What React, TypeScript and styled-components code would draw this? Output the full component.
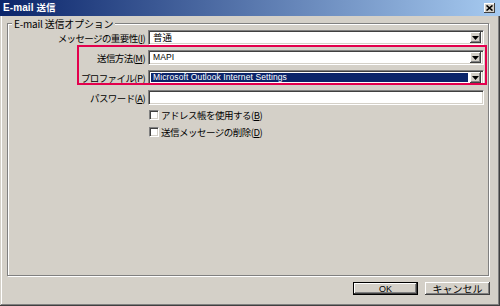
import React from "react";
import styled, { createGlobalStyle } from "styled-components";

const GlobalStyle = createGlobalStyle`
  html, body { margin: 0; padding: 0; background: #d4d0c8; }
  body { font-family: "Noto Sans CJK JP", "Noto Sans", sans-serif; }
  * { box-sizing: border-box; }
`;

const Window = styled.div`
  position: relative;
  width: 500px;
  height: 306px;
  display: flex;
  flex-direction: column;
  background: #d4d0c8;
  box-shadow: inset -1px -1px 0 #404040, inset 1px 1px 0 #d4d0c8,
    inset -2px -2px 0 #808080, inset 2px 2px 0 #ffffff;
  font-family: "Noto Sans CJK JP", "Noto Sans", sans-serif;
  font-size: 10px;
  color: #000;
`;

const TitleBar = styled.div`
  height: 16px;
  display: flex;
  align-items: center;
  justify-content: space-between;
  padding: 0 5px 0 3px;
  background: linear-gradient(to right, #0a246a, #a6caf0);
  color: #fff;
  font-weight: bold;
  font-size: 10px;
  line-height: 16px;
`;

const TitleText = styled.span`
  font-family: "Liberation Sans", "Noto Sans CJK JP", sans-serif;
  letter-spacing: 0.1px;
`;

const CloseButton = styled.div`
  width: 11px;
  height: 10px;
  background: #d4d0c8;
  box-shadow: inset -1px -1px 0 #404040, inset 1px 1px 0 #ffffff;
  display: flex;
  align-items: center;
  justify-content: center;
`;

const Content = styled.div`
  flex: 1;
  display: flex;
  flex-direction: column;
  padding: 2px 11px 0 7px;
`;

const Group = styled.fieldset`
  flex: 1;
  margin: 0;
  padding: 0 5px 0 0;
  min-width: 0;
  border: 1px solid #808080;
  box-shadow: 1px 1px 0 #ffffff, inset 1px 1px 0 #ffffff;
`;

const Legend = styled.legend`
  margin-left: 4px;
  padding: 0 2px;
  background: #d4d0c8;
  line-height: 11px;
  font-size: 10px;
  letter-spacing: -0.2px;
`;

const Form = styled.div`
  display: grid;
  grid-template-columns: 137px 336px;
  grid-auto-rows: 15px;
  column-gap: 3px;
  row-gap: 5px;
  padding-top: 1px;
`;

const Label = styled.div`
  display: flex;
  align-items: center;
  justify-content: flex-end;
  white-space: nowrap;
  font-size: 9.5px;
  letter-spacing: -0.6px;
`;

const Field = styled.div`
  display: flex;
  align-items: stretch;
  background: #ffffff;
  border-top: 1px solid #808080;
  border-left: 1px solid #808080;
  border-bottom: 1px solid #ffffff;
  border-right: 1px solid #ffffff;
  box-shadow: inset 1px 1px 0 #404040, inset -1px -1px 0 #d4d0c8;
  padding: 1px 2px 1px 1px;
`;

const FieldText = styled.div<{ $selected?: boolean }>`
  flex: 1;
  display: flex;
  align-items: center;
  padding-left: 2px;
  margin: 1px 2px 1px 1px;
  background: ${(p) => (p.$selected ? "#0a246a" : "transparent")};
  color: ${(p) => (p.$selected ? "#ffffff" : "#000000")};
  font-family: "Liberation Sans", "Noto Sans CJK JP", sans-serif;
  font-size: 8.5px;
  line-height: 9px;
  letter-spacing: 0.1px;
  white-space: nowrap;
  overflow: visible;
`;

const JpText = styled.span`
  font-family: "Noto Sans CJK JP", sans-serif;
  font-size: 9.5px;
  line-height: 9px;
  letter-spacing: 0;
`;

const DropButton = styled.div`
  width: 11px;
  background: #d4d0c8;
  box-shadow: inset -1px -1px 0 #404040, inset 1px 1px 0 #ffffff,
    inset -2px -2px 0 #808080;
  display: flex;
  align-items: center;
  justify-content: center;
`;

const Checks = styled.div`
  display: flex;
  flex-direction: column;
  padding: 1px 0 0 140px;
`;

const CheckRow = styled.div`
  height: 17px;
  display: flex;
  align-items: center;
  gap: 2px;
  white-space: nowrap;
  font-size: 9.5px;
  letter-spacing: -0.5px;
`;

const CheckBox = styled.div`
  width: 10px;
  height: 10px;
  margin-left: 1px;
  background: #ffffff;
  border-top: 1px solid #808080;
  border-left: 1px solid #808080;
  border-bottom: 1px solid #ffffff;
  border-right: 1px solid #ffffff;
  box-shadow: inset 1px 1px 0 #404040, inset -1px -1px 0 #d4d0c8;
`;

const Footer = styled.div`
  height: 30px;
  display: flex;
  justify-content: flex-end;
  align-items: flex-start;
  gap: 7px;
  padding: 6px 0 0 0;
  margin-right: -1px;
`;

const Button = styled.div<{ $default?: boolean }>`
  width: 65px;
  height: 13px;
  display: flex;
  align-items: center;
  justify-content: center;
  background: #d4d0c8;
  font-size: 10px;
  box-shadow: ${(p) =>
    p.$default
      ? "inset 0 0 0 1px #000, inset -2px -2px 0 #404040, inset 2px 2px 0 #ffffff, inset -3px -3px 0 #808080"
      : "inset -1px -1px 0 #404040, inset 1px 1px 0 #ffffff, inset -2px -2px 0 #808080"};
`;

const OkText = styled.span`
  font-family: "Liberation Sans", sans-serif;
  font-size: 9px;
`;

const Highlight = styled.div`
  position: absolute;
  left: 77px;
  top: 45px;
  width: 410px;
  height: 40px;
  border: 2px solid #e3004d;
  pointer-events: none;
`;

const Arrow = () => (
  <svg width="7" height="4" viewBox="0 0 7 4">
    <path d="M0 0H7L3.5 4Z" fill="#000" />
  </svg>
);

const CloseIcon = () => (
  <svg width="7" height="6" viewBox="0 0 7 6">
    <path d="M0.5 0.5L6.5 5.5M6.5 0.5L0.5 5.5" stroke="#000" strokeWidth="1.6" />
  </svg>
);

const Key = ({ k }: { k: string }) => (
  <>
    (<u>{k}</u>)
  </>
);

const Select = ({ value, selected, jp }: { value: string; selected?: boolean; jp?: boolean }) => (
  <Field>
    <FieldText $selected={selected}>{jp ? <JpText>{value}</JpText> : value}</FieldText>
    <DropButton>
      <Arrow />
    </DropButton>
  </Field>
);

export default function App() {
  return (
    <>
      <GlobalStyle />
      <Window>
        <TitleBar>
          <TitleText>
            E-mail <JpText>送信</JpText>
          </TitleText>
          <CloseButton>
            <CloseIcon />
          </CloseButton>
        </TitleBar>
        <Content>
          <Group>
            <Legend>E-mail 送信オプション</Legend>
            <Form>
              <Label>
                メッセージの重要性<Key k="I" />
              </Label>
              <Select value="普通" jp />
              <Label>
                送信方法<Key k="M" />
              </Label>
              <Select value="MAPI" />
              <Label>
                プロファイル<Key k="P" />
              </Label>
              <Select value="Microsoft Outlook Internet Settings" selected />
              <Label>
                パスワード<Key k="A" />
              </Label>
              <Field />
            </Form>
            <Checks>
              <CheckRow>
                <CheckBox />
                <span>
                  アドレス帳を使用する<Key k="B" />
                </span>
              </CheckRow>
              <CheckRow>
                <CheckBox />
                <span>
                  送信メッセージの削除<Key k="D" />
                </span>
              </CheckRow>
            </Checks>
          </Group>
          <Footer>
            <Button $default>
              <OkText>OK</OkText>
            </Button>
            <Button>キャンセル</Button>
          </Footer>
        </Content>
        <Highlight />
      </Window>
    </>
  );
}
